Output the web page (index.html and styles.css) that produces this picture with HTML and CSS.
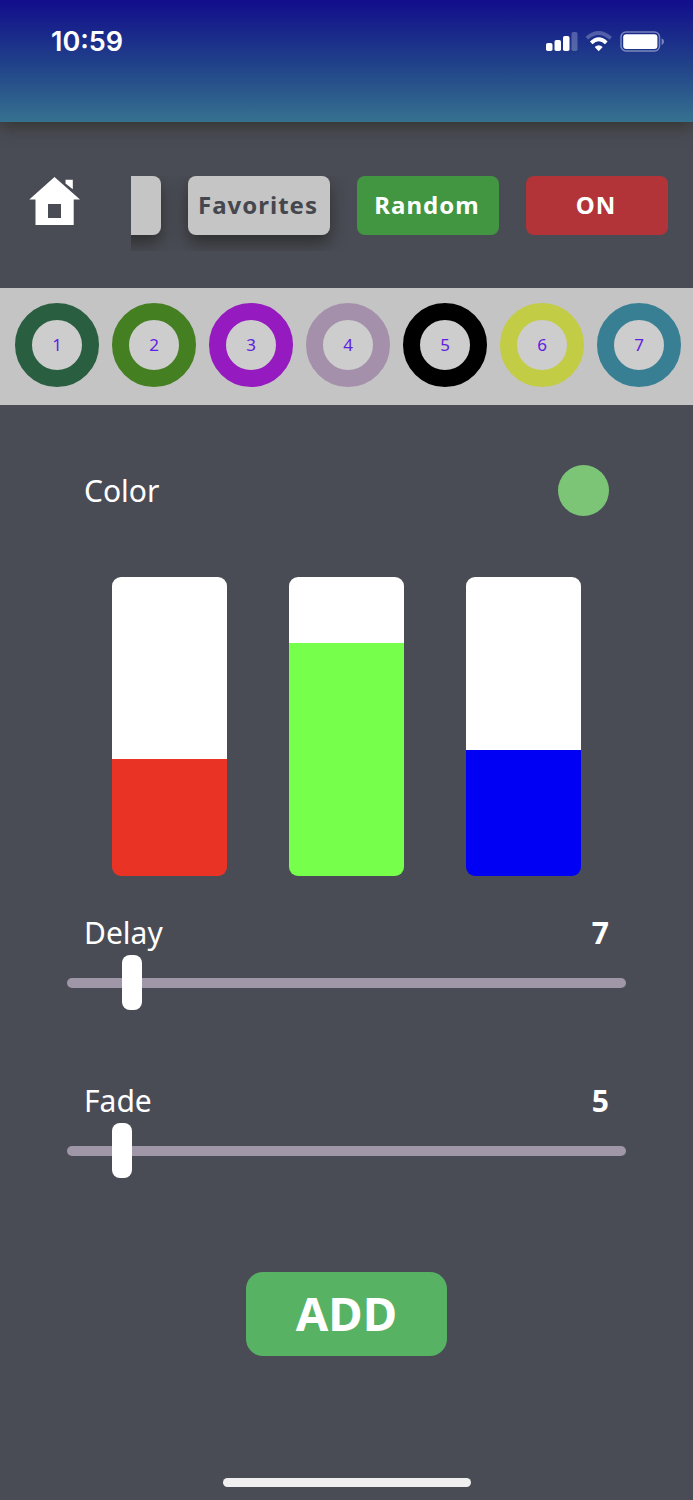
FILE: index.html
```html
<!DOCTYPE html>
<html lang="en">
<head>
<meta charset="utf-8">
<meta name="viewport" content="width=device-width, initial-scale=1">
<title>Light control</title>
<link rel="stylesheet" href="styles.css">
</head>
<body>
<div class="app">
  <header class="status-bar">
    <time class="clock">10:59</time>
    <svg class="status-icons" viewBox="0 0 118 22" aria-hidden="true">
      <g fill="#fff">
        <rect x="0" y="12" width="6.5" height="8" rx="1.8"/>
        <rect x="8.5" y="9" width="6.5" height="11" rx="1.8"/>
        <rect x="17" y="5" width="6.5" height="15" rx="1.8"/>
        <rect x="25.500" y="1" width="6" height="19" rx="1.8" opacity=".25"/>
      </g>
      <g fill="none" stroke="#fff" stroke-width="3.800">
        <path d="M40.800 7.200Q52.500-3.200 64.700 7.200" opacity=".25"/>
        <path d="M45.200 11.800Q52.700 4.600 60.300 11.800"/>
      </g>
      <path d="M52.700 20.200l-4-4.100q4-3.600 8 0z" fill="#fff"/>
      <rect x="75" y="1" width="38.500" height="19" rx="5" fill="none" stroke="#fff" stroke-width="1.500" opacity=".42"/>
      <rect x="77.200" y="3.200" width="34.200" height="14.800" rx="3" fill="#fff"/>
      <path d="M115.600 7.300q2.400.9 2.400 3.300t-2.400 3.300z" fill="#fff" opacity=".42"/>
    </svg>
  </header>

  <nav class="toolbar">
    <a class="home" href="#" aria-label="Home">
      <svg viewBox="0 0 51 49" aria-hidden="true">
        <path fill="#fff" fill-rule="evenodd" d="M25.500 1L51 23.500H44.700V49H6.500V23.500H0.300zM19 28v14h13V28z"/>
        <path fill="#fff" d="M36.500 3.800h7.300v9.500L36.500 7.500z"/>
      </svg>
    </a>
    <div class="actions">
      <button class="action action-light" type="button" aria-label="Presets"></button>
      <button class="action action-light" type="button">Favorites</button>
      <button class="action action-random" type="button">Random</button>
      <button class="action action-power" type="button">ON</button>
    </div>
  </nav>

  <div class="swatches">
    <button class="swatch swatch-pine" type="button">1</button>
    <button class="swatch swatch-leaf" type="button">2</button>
    <button class="swatch swatch-violet" type="button">3</button>
    <button class="swatch swatch-mauve" type="button">4</button>
    <button class="swatch swatch-black" type="button">5</button>
    <button class="swatch swatch-lime" type="button">6</button>
    <button class="swatch swatch-teal" type="button">7</button>
  </div>

  <main class="editor">
    <div class="row row-color">
      <h2 class="label">Color</h2>
      <span class="preview"></span>
    </div>
    <div class="channels">
      <input class="channel channel-red" type="range" min="0" max="100" value="39" aria-label="Red" style="--level:39%">
      <input class="channel channel-green" type="range" min="0" max="100" value="78" aria-label="Green" style="--level:78%">
      <input class="channel channel-blue" type="range" min="0" max="100" value="42" aria-label="Blue" style="--level:42%">
    </div>
    <div class="setting">
      <div class="row">
        <label class="label" for="delay">Delay</label>
        <output class="value" for="delay">7</output>
      </div>
      <input class="slider" id="delay" type="range" min="1" max="60" value="7">
    </div>
    <div class="setting">
      <div class="row">
        <label class="label" for="fade">Fade</label>
        <output class="value" for="fade">5</output>
      </div>
      <input class="slider" id="fade" type="range" min="0" max="60" value="5">
    </div>
    <button class="add" type="button">ADD</button>
  </main>

  <footer class="home-indicator"></footer>
</div>
</body>
</html>
```
FILE: styles.css
```css
* {
  box-sizing: border-box;
}

body {
  margin: 0;
  background: #4a4c55;
  color: #fff;
  font-family: "Noto Sans", "Open Sans", sans-serif;
}

button {
  border: 0;
  padding: 0 0 2px;
  font-family: inherit;
  cursor: pointer;
}

.app {
  display: flex;
  flex-direction: column;
  min-height: 100vh;
}

.status-bar {
  display: flex;
  justify-content: space-between;
  align-items: flex-start;
  padding: 26px 29px 64px 51px;
  background: linear-gradient(#120d8c, #214489 55%, #36718f);
  box-shadow: 0 4px 16px rgba(40, 40, 30, 0.7);
}

.clock {
  font-family: Inter, sans-serif;
  font-size: 27px;
  font-weight: 600;
  line-height: 32px;
}

.status-icons {
  width: 118px;
  height: 22px;
  margin-top: 5px;
}

.toolbar {
  display: flex;
  align-items: flex-start;
  gap: 51px;
  padding: 54px 0 37px 29px;
}

.home {
  flex: none;
  width: 51px;
}

.home svg {
  display: block;
  width: 100%;
}

.actions {
  display: flex;
  flex: 1;
  justify-content: flex-end;
  gap: 27px;
  min-width: 0;
  padding: 0 25px 16px 0;
  overflow: hidden;
}

.action {
  flex: none;
  width: 142px;
  height: 59px;
  padding-right: 2px;
  border-radius: 8px;
  color: #fff;
  font-size: 24px;
  font-weight: 700;
  letter-spacing: 1px;
}

.action-light {
  background: #c5c5c5;
  color: #45474f;
  box-shadow: 0 8px 16px rgba(35, 37, 32, 0.75);
}

.action-random {
  background: #429641;
}

.action-power {
  background: #b33438;
}

.swatches {
  display: flex;
  justify-content: space-between;
  padding: 15px 12px 18px 15px;
  background: #c4c4c4;
}

.swatch {
  width: 84px;
  height: 84px;
  border: 17px solid;
  border-radius: 50%;
  background: #cdcdcd;
  color: #6020e0;
  font-size: 17px;
}

.swatch-pine { border-color: #295f40; }
.swatch-leaf { border-color: #447f22; }
.swatch-violet { border-color: #951abf; }
.swatch-mauve { border-color: #a490aa; }
.swatch-black { border-color: #000; }
.swatch-lime { border-color: #c2cc45; }
.swatch-teal { border-color: #397f94; }

.editor {
  display: flex;
  flex: 1;
  flex-direction: column;
  padding: 60px 67px 0;
}

.row {
  display: flex;
  justify-content: space-between;
  align-items: center;
  padding: 0 17px;
}

.label {
  margin: 0;
  font-size: 30px;
  font-weight: 400;
  line-height: 40px;
}

.preview {
  width: 51px;
  height: 51px;
  border-radius: 50%;
  background: #7cc577;
}

.channels {
  display: flex;
  justify-content: space-between;
  margin: 61px 45px 37px;
}

.channel {
  appearance: none;
  writing-mode: vertical-lr;
  direction: rtl;
  width: 115px;
  height: 299px;
  margin: 0;
  border-radius: 9px;
  background: linear-gradient(to top, var(--tint) var(--level), #fff var(--level));
}

.channel::-webkit-slider-thumb {
  appearance: none;
  width: 115px;
  height: 1px;
  background: transparent;
}

.channel-red { --tint: #e93425; }
.channel-green { --tint: #76ff4b; }
.channel-blue { --tint: #0000f5; }

.setting {
  display: flex;
  flex-direction: column;
  gap: 2px;
  margin-bottom: 71px;
}

.value {
  font-size: 30px;
  font-weight: 700;
  line-height: 40px;
}

.slider {
  appearance: none;
  width: 100%;
  height: 55px;
  margin: 0;
  background: transparent;
}

.slider::-webkit-slider-runnable-track {
  height: 10px;
  border-radius: 5px;
  background: #9f97a8;
}

.slider::-webkit-slider-thumb {
  appearance: none;
  width: 20px;
  height: 55px;
  margin-top: -23px;
  border-radius: 8px;
  background: #fff;
}

.add {
  align-self: center;
  width: 201px;
  height: 84px;
  margin-top: 23px;
  border-radius: 17px;
  background: #57b263;
  color: #fff;
  font-size: 47px;
  font-weight: 700;
}

.home-indicator {
  align-self: center;
  width: 248px;
  height: 9px;
  margin: 24px 0 13px;
  border-radius: 5px;
  background: #f0f0f0;
}
```
